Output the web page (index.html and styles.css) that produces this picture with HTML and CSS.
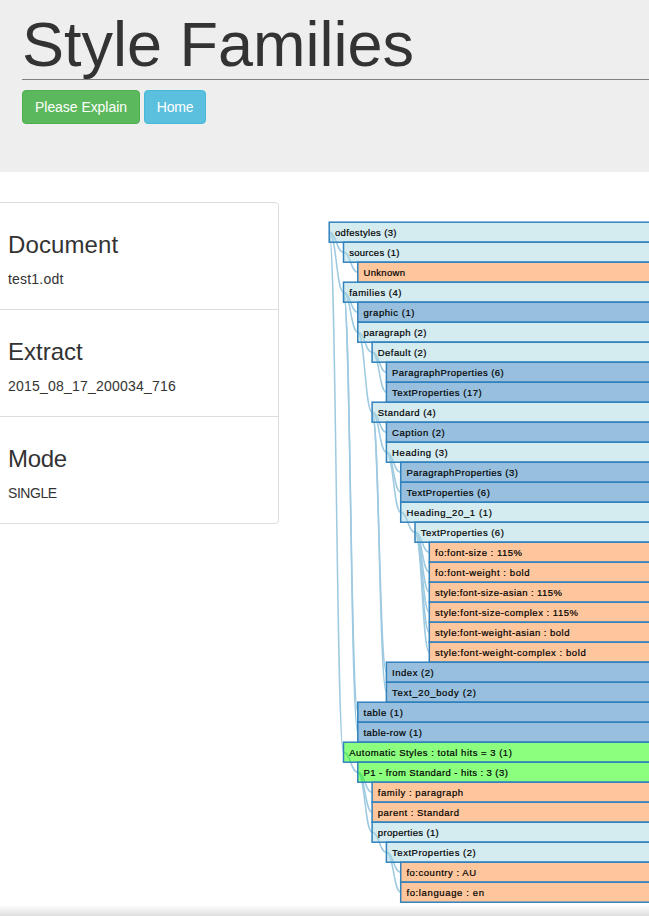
FILE: index.html
```html
<!DOCTYPE html>
<html lang="en">
<head>
<meta charset="utf-8">
<title>Style Families</title>
<link rel="stylesheet" href="styles.css">
</head>
<body>
<header class="masthead">
  <h1 class="title">Style Families</h1>
  <nav class="actions">
    <a class="btn btn-success">Please Explain</a>
    <a class="btn btn-info">Home</a>
  </nav>
</header>
<main class="content">
  <section class="list">
    <div class="item document"><h3>Document</h3><p>test1.odt</p></div>
    <div class="item extract"><h3>Extract</h3><p>2015_08_17_200034_716</p></div>
    <div class="item mode"><h3>Mode</h3><p>SINGLE</p></div>
  </section>
  <svg class="tree" id="tree" width="329" height="692"></svg>
</main>
<footer class="footer"></footer>
<script src="tree.js"></script>
</body>
</html>
```
FILE: styles.css
```css
* { box-sizing: border-box; }
body {
  margin: 0;
  height: 916px;
  overflow: hidden;
  display: flex;
  flex-direction: column;
  background: #fff;
  color: #333;
  font: 14px/20px "Liberation Sans", Arial, sans-serif;
}
.masthead {
  height: 172px;
  flex: none;
  padding-left: 22px;
  background: #eee;
}
.title {
  margin: 0 0 10px;
  height: 80px;
  padding-top: 9px;
  border-bottom: 1px solid #808080;
  font-size: 63px;
  line-height: 70px;
  font-weight: normal;
}
.actions { display: flex; gap: 4px; }
.btn {
  height: 34px;
  padding: 6px 0;
  border: 1px solid;
  border-radius: 4px;
  color: #fff;
  text-align: center;
}
.btn-success { width: 118px; background: #5cb85c; border-color: #4cae4c; letter-spacing: -.05px; }
.btn-info { width: 62px; background: #5bc0de; border-color: #46b8da; letter-spacing: -.2px; }
.content { display: flex; flex: 1; min-height: 0; }
.list {
  flex: none;
  width: 287px;
  height: 322px;
  margin: 30px 41px 0 -8px;
  border: 1px solid #ddd;
  border-radius: 4px;
}
.item { height: 107px; padding: 10px 15px; }
.item + .item { border-top: 1px solid #ddd; }
.item:first-child { height: 106px; }
.item h3 { margin: 19px 0 11px; font-size: 24px; line-height: 26px; font-weight: normal; }
.item p { margin: 0 0 10px; }
.document h3 { letter-spacing: .12px; }
.document p { letter-spacing: .2px; }
.extract p { letter-spacing: .22px; }
.mode h3 { letter-spacing: -.3px; }
.mode p { letter-spacing: -.45px; }
.tree { flex: none; margin-top: 40px; }
.link { fill: none; stroke: #9ecae1; stroke-width: 1.5px; }
.node rect { fill-opacity: .5; stroke: #3182bd; stroke-width: 1.5px; }
.node text { font: 9.5px "Liberation Sans", Arial, sans-serif; fill: #000; stroke: #000; stroke-width: .2px; }
.open rect { fill: #aad7e2; }
.closed rect { fill: #3182bd; }
.leaf rect { fill: #fd8d3c; }
.hit rect { fill: #1aff00; }
.footer { flex: none; height: 11px; background: linear-gradient(#fff, #dedede); }
```
FILE: tree.js
```js
// depth, state, label, right edge of the label in page pixels
const rows = [
  [0, "open", "odfestyles (3)", 396.5],
  [1, "open", "sources (1)", 399.5],
  [2, "leaf", "Unknown", 405],
  [1, "open", "families (4)", 401.5],
  [2, "closed", "graphic (1)", 414.5],
  [2, "open", "paragraph (2)", 426.5],
  [3, "open", "Default (2)", 426.5],
  [4, "closed", "ParagraphProperties (6)", 503.7],
  [4, "closed", "TextProperties (17)", 481.7],
  [3, "open", "Standard (4)", 435.7],
  [4, "closed", "Caption (2)", 444.7],
  [4, "open", "Heading (3)", 447.7],
  [5, "closed", "ParagraphProperties (3)", 517.8],
  [5, "closed", "TextProperties (6)", 489.8],
  [5, "open", "Heading_20_1 (1)", 491.8],
  [6, "open", "TextProperties (6)", 503.8],
  [7, "leaf", "fo:font-size : 115%", 522],
  [7, "leaf", "fo:font-weight : bold", 529.5],
  [7, "leaf", "style:font-size-asian : 115%", 562],
  [7, "leaf", "style:font-size-complex : 115%", 578],
  [7, "leaf", "style:font-weight-asian : bold", 569.5],
  [7, "leaf", "style:font-weight-complex : bold", 585.7],
  [4, "closed", "Index (2)", 433.7],
  [4, "closed", "Text_20_body (2)", 475.8],
  [2, "closed", "table (1)", 402.8],
  [2, "closed", "table-row (1)", 421.8],
  [1, "hit", "Automatic Styles : total hits = 3 (1)", 511.8],
  [2, "hit", "P1 - from Standard - hits : 3 (3)", 507.8],
  [3, "leaf", "family : paragraph", 463],
  [3, "leaf", "parent : Standard", 459],
  [3, "open", "properties (1)", 438.7],
  [4, "open", "TextProperties (2)", 475.7],
  [5, "leaf", "fo:country : AU", 476],
  [5, "leaf", "fo:language : en", 484]
];
const step = 14.3, left = 9.2, top0 = 20.2;
const parents = [];
let links = "", nodes = "";
rows.forEach(([depth, state, label, end], i) => {
  const x = left + depth * step, y = top0 + i * 20;
  parents[depth] = { x, y };
  if (depth) {
    const p = parents[depth - 1], mid = (p.x + x) / 2;
    links += `<path class="link" d="M${p.x},${p.y}C${mid},${p.y} ${mid},${y} ${x},${y}"/>`;
  }
  nodes += `<g class="node ${state}"><rect x="${x}" y="${y - 10}" width="400" height="20"/>` +
    `<text x="${x + 5.7}" y="${y + 3.7}" textLength="${end - 320 - x - 5.7}">${label}</text></g>`;
});
document.getElementById("tree").innerHTML = links + nodes;
```
